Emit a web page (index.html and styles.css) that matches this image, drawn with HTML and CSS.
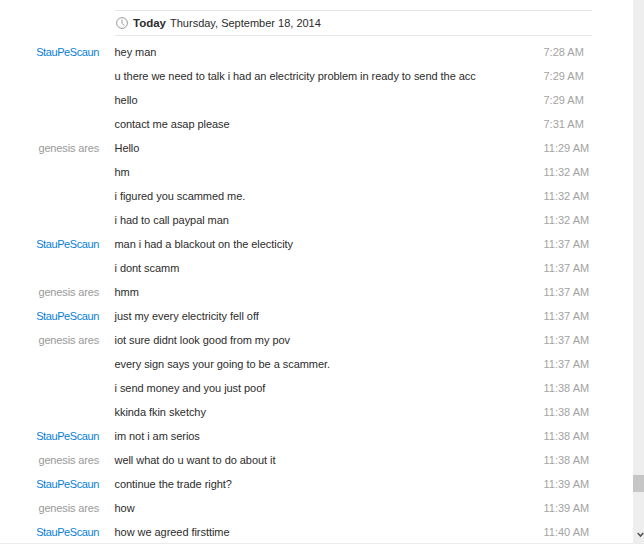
FILE: index.html
```html
<!DOCTYPE html>
<html lang="en">

<head>
    <meta charset="UTF-8">
    <title>Chat history</title>
    <link rel="stylesheet" href="styles.css">
</head>

<body>
    <div class="window">
        <div class="chat">
            <!-- Date header -->
            <div class="day-header">
                <svg class="clock" width="12" height="12" viewBox="0 0 12 12">
                    <circle cx="6" cy="6" r="5.4" fill="none" stroke="#9a9a9a" stroke-width="1"/>
                    <path d="M6 2.5V6.3L8.4 8.7" fill="none" stroke="#9a9a9a" stroke-width="1"/>
                </svg>
                <b>Today</b> <span>Thursday, September 18, 2014</span>
            </div>

            <!-- Messages -->
            <div class="row"><span class="name blue">StauPeScaun</span><span class="text">hey man</span><span class="time">7:28 AM</span></div>
            <div class="row"><span class="name"></span><span class="text">u there we need to talk i had an electricity problem in ready to send the acc</span><span class="time">7:29 AM</span></div>
            <div class="row"><span class="name"></span><span class="text">hello</span><span class="time">7:29 AM</span></div>
            <div class="row"><span class="name"></span><span class="text">contact me asap please</span><span class="time">7:31 AM</span></div>
            <div class="row"><span class="name">genesis ares</span><span class="text">Hello</span><span class="time">11:29 AM</span></div>
            <div class="row"><span class="name"></span><span class="text">hm</span><span class="time">11:32 AM</span></div>
            <div class="row"><span class="name"></span><span class="text">i figured you scammed me.</span><span class="time">11:32 AM</span></div>
            <div class="row"><span class="name"></span><span class="text">i had to call paypal man</span><span class="time">11:32 AM</span></div>
            <div class="row"><span class="name blue">StauPeScaun</span><span class="text">man i had a blackout on the electicity</span><span class="time">11:37 AM</span></div>
            <div class="row"><span class="name"></span><span class="text">i dont scamm</span><span class="time">11:37 AM</span></div>
            <div class="row"><span class="name">genesis ares</span><span class="text">hmm</span><span class="time">11:37 AM</span></div>
            <div class="row"><span class="name blue">StauPeScaun</span><span class="text">just my every electricity fell off</span><span class="time">11:37 AM</span></div>
            <div class="row"><span class="name">genesis ares</span><span class="text">iot sure didnt look good from my pov</span><span class="time">11:37 AM</span></div>
            <div class="row"><span class="name"></span><span class="text">every sign says your going to be a scammer.</span><span class="time">11:37 AM</span></div>
            <div class="row"><span class="name"></span><span class="text">i send money and you just poof</span><span class="time">11:38 AM</span></div>
            <div class="row"><span class="name"></span><span class="text">kkinda fkin sketchy</span><span class="time">11:38 AM</span></div>
            <div class="row"><span class="name blue">StauPeScaun</span><span class="text">im not i am serios</span><span class="time">11:38 AM</span></div>
            <div class="row"><span class="name">genesis ares</span><span class="text">well what do u want to do about it</span><span class="time">11:38 AM</span></div>
            <div class="row"><span class="name blue">StauPeScaun</span><span class="text">continue the trade right?</span><span class="time">11:39 AM</span></div>
            <div class="row"><span class="name">genesis ares</span><span class="text">how</span><span class="time">11:39 AM</span></div>
            <div class="row"><span class="name blue">StauPeScaun</span><span class="text">how we agreed firsttime</span><span class="time">11:40 AM</span></div>
        </div>

        <!-- Scrollbar -->
        <div class="scrollbar">
            <div class="thumb"></div>
            <svg class="arrow" width="7" height="6" viewBox="0 0 7 6">
                <path d="M0.7 1L3.5 4L6.3 1" fill="none" stroke="#555" stroke-width="1.6"/>
            </svg>
        </div>
    </div>
</body>

</html>
```

FILE: styles.css
```css
/* Basic styling */
html, body {
    margin: 0;
    padding: 0;
    height: 100%;
    overflow: hidden;
    background: #fff;
}

body {
    font-family: "Liberation Sans", Arial, sans-serif;
    font-size: 11px;
    color: #2c2c2c;
}

.window {
    display: flex;
    height: 543px;
    border-bottom: 1px solid #ececec;
}

.chat {
    flex: 1;
    padding-top: 10px;
    overflow: hidden;
}

.day-header {
    display: flex;
    align-items: center;
    margin-left: 115px;
    width: 477px;
    height: 24px;
    border-top: 1px solid #e6e6e6;
    border-bottom: 1px solid #e6e6e6;
    white-space: pre;
}

.clock {
    margin-left: 1px;
    margin-right: 5px;
}

.day-header b {
    font-size: 11.5px;
    margin-right: 4px;
}

.row {
    display: flex;
    align-items: center;
    height: 24px;
}

.day-header + .row {
    margin-top: 4px;
}

.name {
    width: 99px;
    flex: none;
    text-align: right;
    letter-spacing: -0.15px;
    color: #999;
}

.name.blue {
    letter-spacing: -0.4px;
    color: #0a7ed8;
}

.text {
    flex: 1;
    margin-left: 15.5px;
    letter-spacing: -0.05px;
    white-space: nowrap;
}

.time {
    width: 89.5px;
    flex: none;
    color: #a3a3a3;
}

.scrollbar {
    position: relative;
    width: 11px;
    flex: none;
    background: #eeeeee;
}

.thumb {
    position: absolute;
    top: 475px;
    left: 0;
    width: 100%;
    height: 17px;
    background: #c6c6c6;
}

.arrow {
    position: absolute;
    top: 532px;
    right: 0;
}
```
